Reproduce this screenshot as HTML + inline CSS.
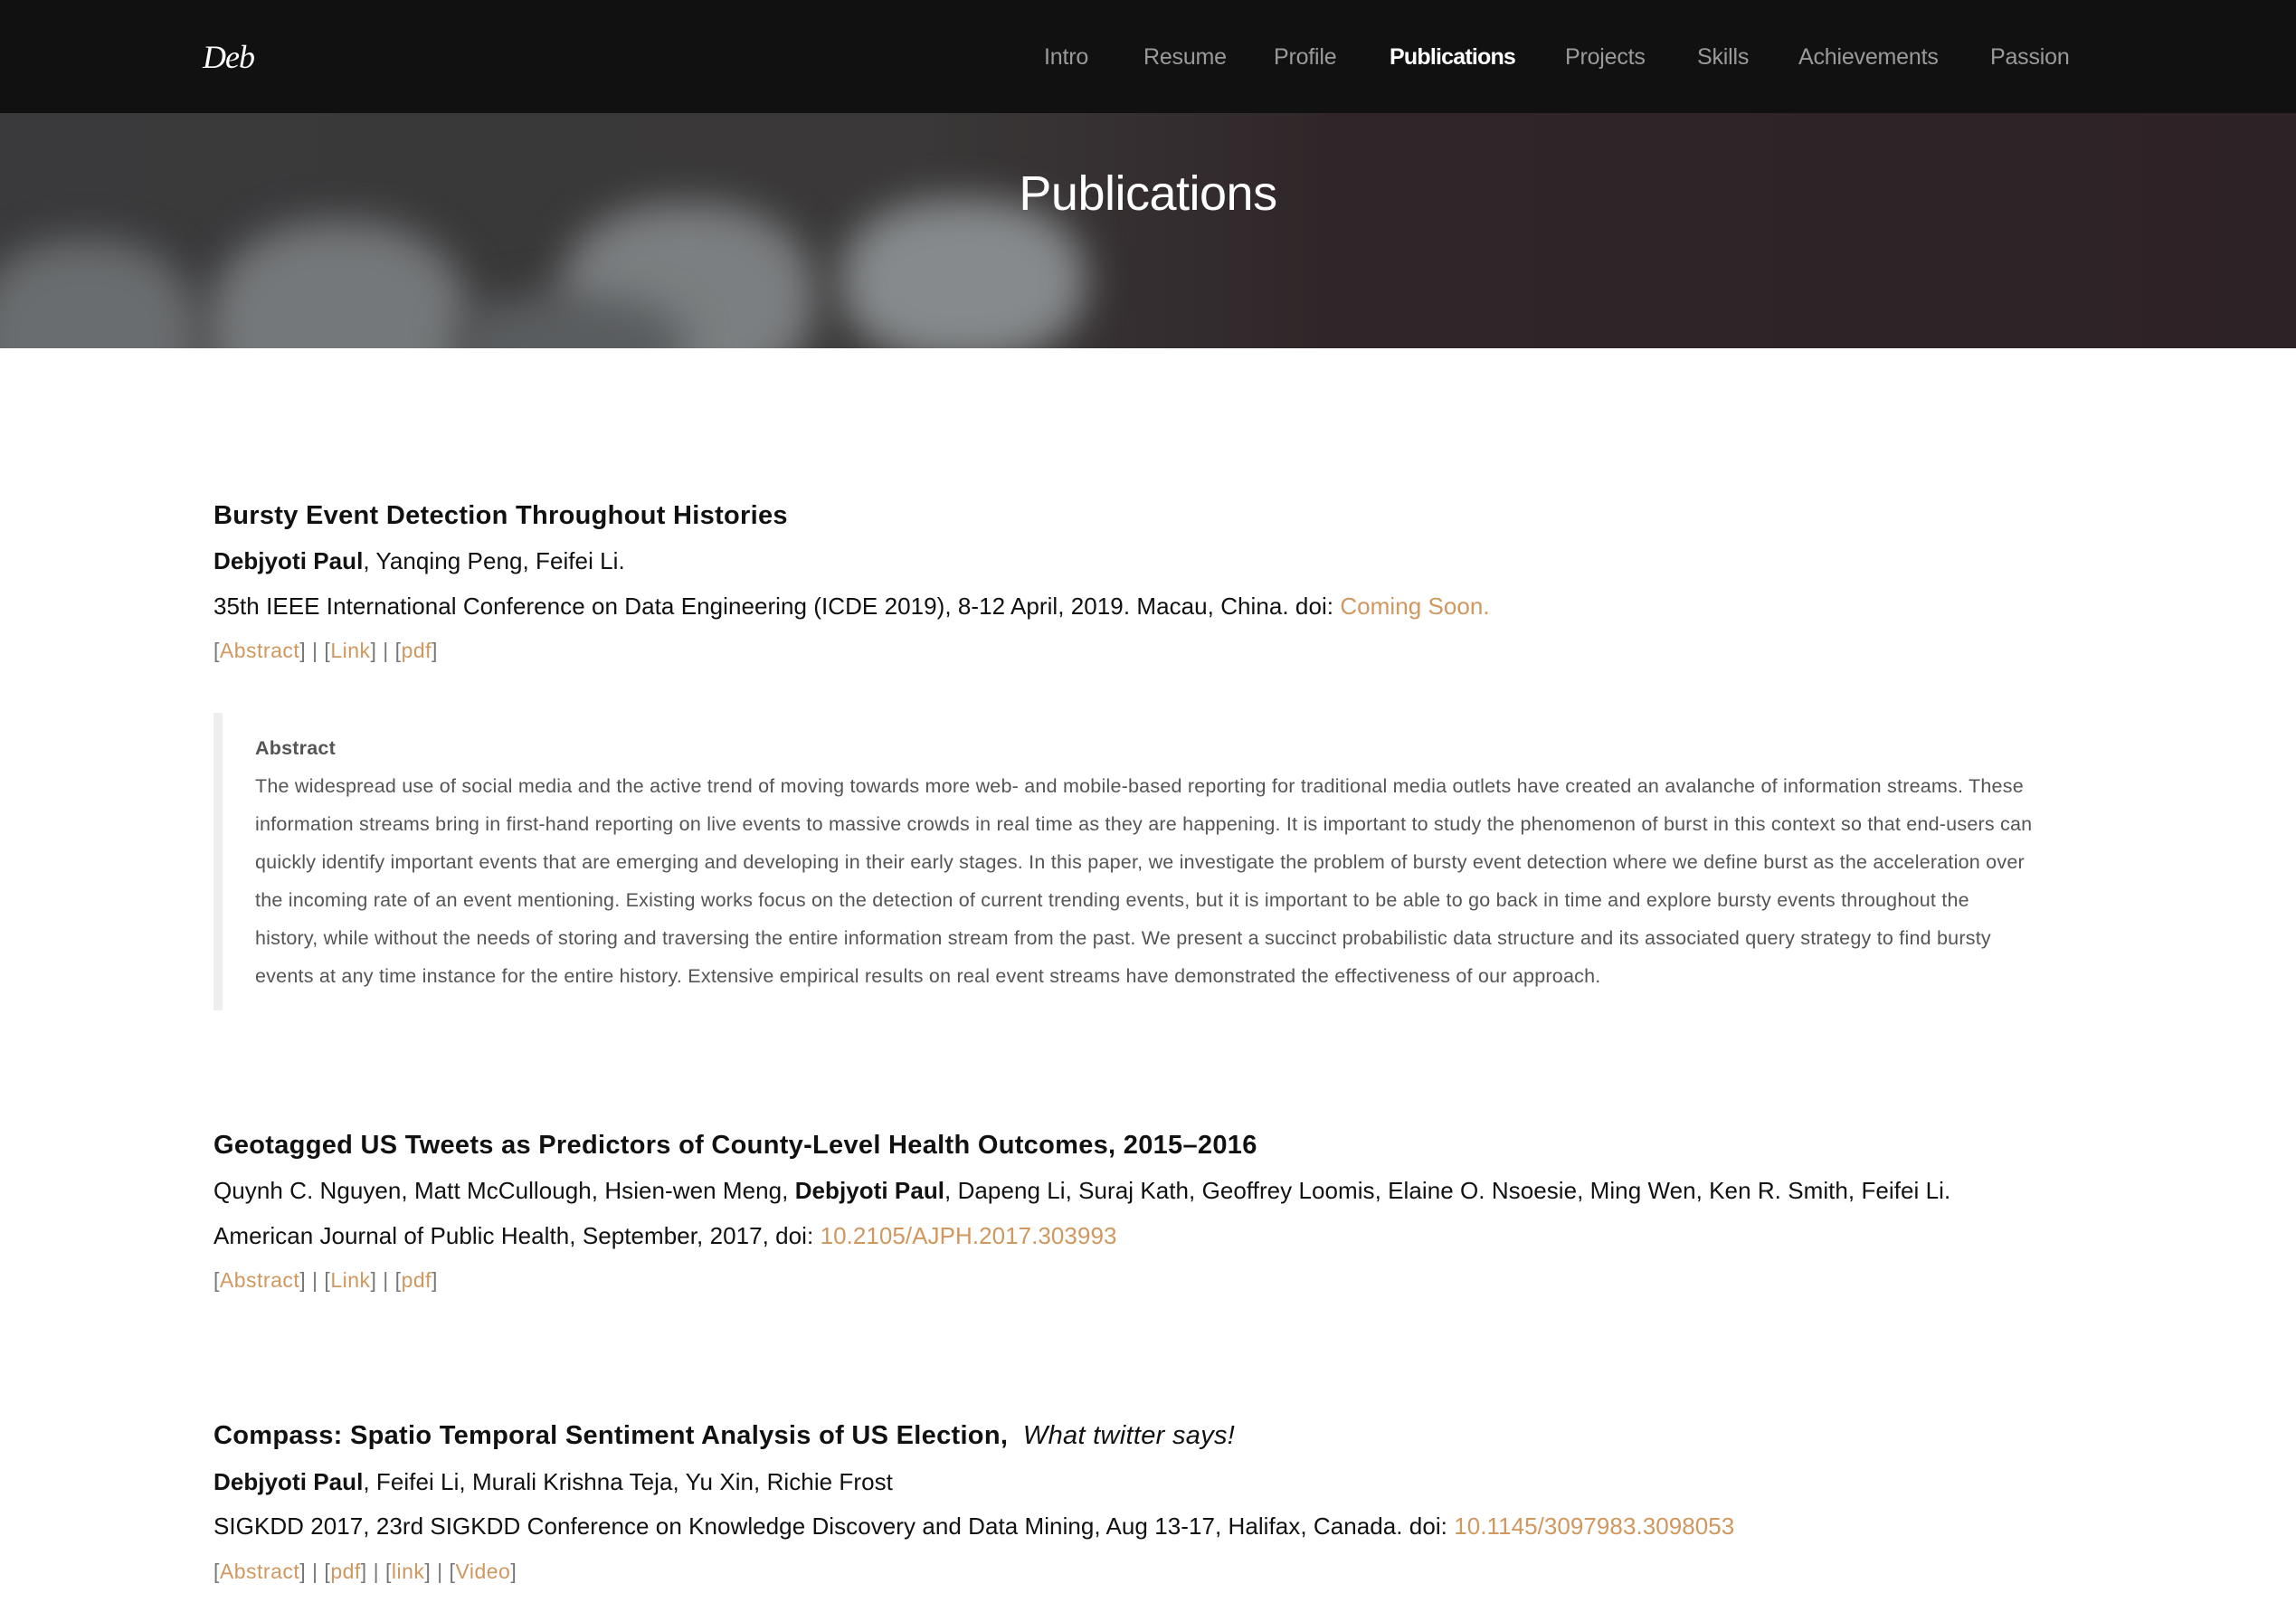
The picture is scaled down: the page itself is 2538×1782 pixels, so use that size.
<!DOCTYPE html>
<html><head><meta charset="utf-8"><style>
*{margin:0;padding:0;box-sizing:border-box}
body{width:2538px;height:1782px;background:#fff;position:relative;overflow:hidden;font-family:"Liberation Sans",sans-serif;color:#111}
.nav{position:absolute;left:0;top:0;width:2538px;height:125px;background:#111}
.logo{position:absolute;left:224px;top:40px;font-family:"Liberation Serif",serif;font-style:italic;color:#fff;font-size:36px;line-height:46px;letter-spacing:-1px}
.ni{position:absolute;top:46px;line-height:34px;font-size:25px;color:#9a9a9a;letter-spacing:-0.2px;white-space:nowrap}
.ni.a{color:#fff;font-weight:bold;letter-spacing:-0.8px}
.hero{position:absolute;left:0;top:125px;width:2538px;height:260px;overflow:hidden;background:linear-gradient(90deg,#3a3a3c 0%,#3a3838 40%,#302629 58%,#2d2226 100%)}
.blob{position:absolute;border-radius:45%;background:#8a8d8f;filter:blur(22px)}
.ht{position:absolute;left:0;width:2538px;text-align:center;color:#fff;font-size:54px;line-height:60px;letter-spacing:-0.5px}
.l{position:absolute;left:236px;white-space:nowrap;line-height:40px}
.t{font-size:29px;font-weight:bold;letter-spacing:0.3px}
.b{font-size:26px;letter-spacing:0.05px}
.k{font-size:23px;color:#777;letter-spacing:0.5px}
a{color:#d0975f;text-decoration:none}
.bq{position:absolute;left:236px;top:788px;width:10px;height:329px;background:#eee}
.ab{position:absolute;left:282px;white-space:nowrap;font-size:21.5px;color:#555;line-height:42px;letter-spacing:0.22px}
</style></head><body>
<div class="nav">
<div class="logo">Deb</div>
<div class="ni" style="left:1154px">Intro</div>
<div class="ni" style="left:1264px">Resume</div>
<div class="ni" style="left:1408px">Profile</div>
<div class="ni a" style="left:1536px">Publications</div>
<div class="ni" style="left:1730px">Projects</div>
<div class="ni" style="left:1876px">Skills</div>
<div class="ni" style="left:1988px">Achievements</div>
<div class="ni" style="left:2200px">Passion</div>
</div>
<div class="hero">
<div class="blob" style="left:-30px;top:140px;width:250px;height:220px;background:#6a6d6f"></div>
<div class="blob" style="left:230px;top:120px;width:290px;height:240px;background:#75787a"></div>
<div class="blob" style="left:620px;top:100px;width:280px;height:210px;background:#7c7f81"></div>
<div class="blob" style="left:930px;top:95px;width:270px;height:180px;background:#868a8c"></div>
<div class="blob" style="left:500px;top:200px;width:260px;height:120px;background:#5a5d5f"></div>
<div class="ht" style="top:59px">Publications</div>
</div>

<div class="l t" style="top:550px">Bursty Event Detection Throughout Histories</div>
<div class="l b" style="top:600px"><b>Debjyoti Paul</b>, Yanqing Peng, Feifei Li.</div>
<div class="l b" style="top:650px">35th IEEE International Conference on Data Engineering (ICDE 2019), 8-12 April, 2019. Macau, China. doi: <a>Coming Soon.</a></div>
<div class="l k" style="top:699px">[<a>Abstract</a>] | [<a>Link</a>] | [<a>pdf</a>]</div>

<div class="bq"></div>
<div class="ab" style="top:806px;font-weight:bold">Abstract</div>
<div class="ab" style="top:848px">The widespread use of social media and the active trend of moving towards more web- and mobile-based reporting for traditional media outlets have created an avalanche of information streams. These</div>
<div class="ab" style="top:890px">information streams bring in first-hand reporting on live events to massive crowds in real time as they are happening. It is important to study the phenomenon of burst in this context so that end-users can</div>
<div class="ab" style="top:932px">quickly identify important events that are emerging and developing in their early stages. In this paper, we investigate the problem of bursty event detection where we define burst as the acceleration over</div>
<div class="ab" style="top:974px">the incoming rate of an event mentioning. Existing works focus on the detection of current trending events, but it is important to be able to go back in time and explore bursty events throughout the</div>
<div class="ab" style="top:1016px">history, while without the needs of storing and traversing the entire information stream from the past. We present a succinct probabilistic data structure and its associated query strategy to find bursty</div>
<div class="ab" style="top:1058px">events at any time instance for the entire history. Extensive empirical results on real event streams have demonstrated the effectiveness of our approach.</div>

<div class="l t" style="top:1246px">Geotagged US Tweets as Predictors of County-Level Health Outcomes, 2015–2016</div>
<div class="l b" style="top:1296px">Quynh C. Nguyen, Matt McCullough, Hsien-wen Meng, <b>Debjyoti Paul</b>, Dapeng Li, Suraj Kath, Geoffrey Loomis, Elaine O. Nsoesie, Ming Wen, Ken R. Smith, Feifei Li.</div>
<div class="l b" style="top:1346px">American Journal of Public Health, September, 2017, doi: <a>10.2105/AJPH.2017.303993</a></div>
<div class="l k" style="top:1395px">[<a>Abstract</a>] | [<a>Link</a>] | [<a>pdf</a>]</div>

<div class="l t" style="top:1567px">Compass: Spatio Temporal Sentiment Analysis of US Election, &nbsp;<i style="font-weight:normal">What twitter says!</i></div>
<div class="l b" style="top:1618px"><b>Debjyoti Paul</b>, Feifei Li, Murali Krishna Teja, Yu Xin, Richie Frost</div>
<div class="l b" style="top:1667px">SIGKDD 2017, 23rd SIGKDD Conference on Knowledge Discovery and Data Mining, Aug 13-17, Halifax, Canada. doi: <a>10.1145/3097983.3098053</a></div>
<div class="l k" style="top:1717px">[<a>Abstract</a>] | [<a>pdf</a>] | [<a>link</a>] | [<a>Video</a>]</div>
</body></html>
